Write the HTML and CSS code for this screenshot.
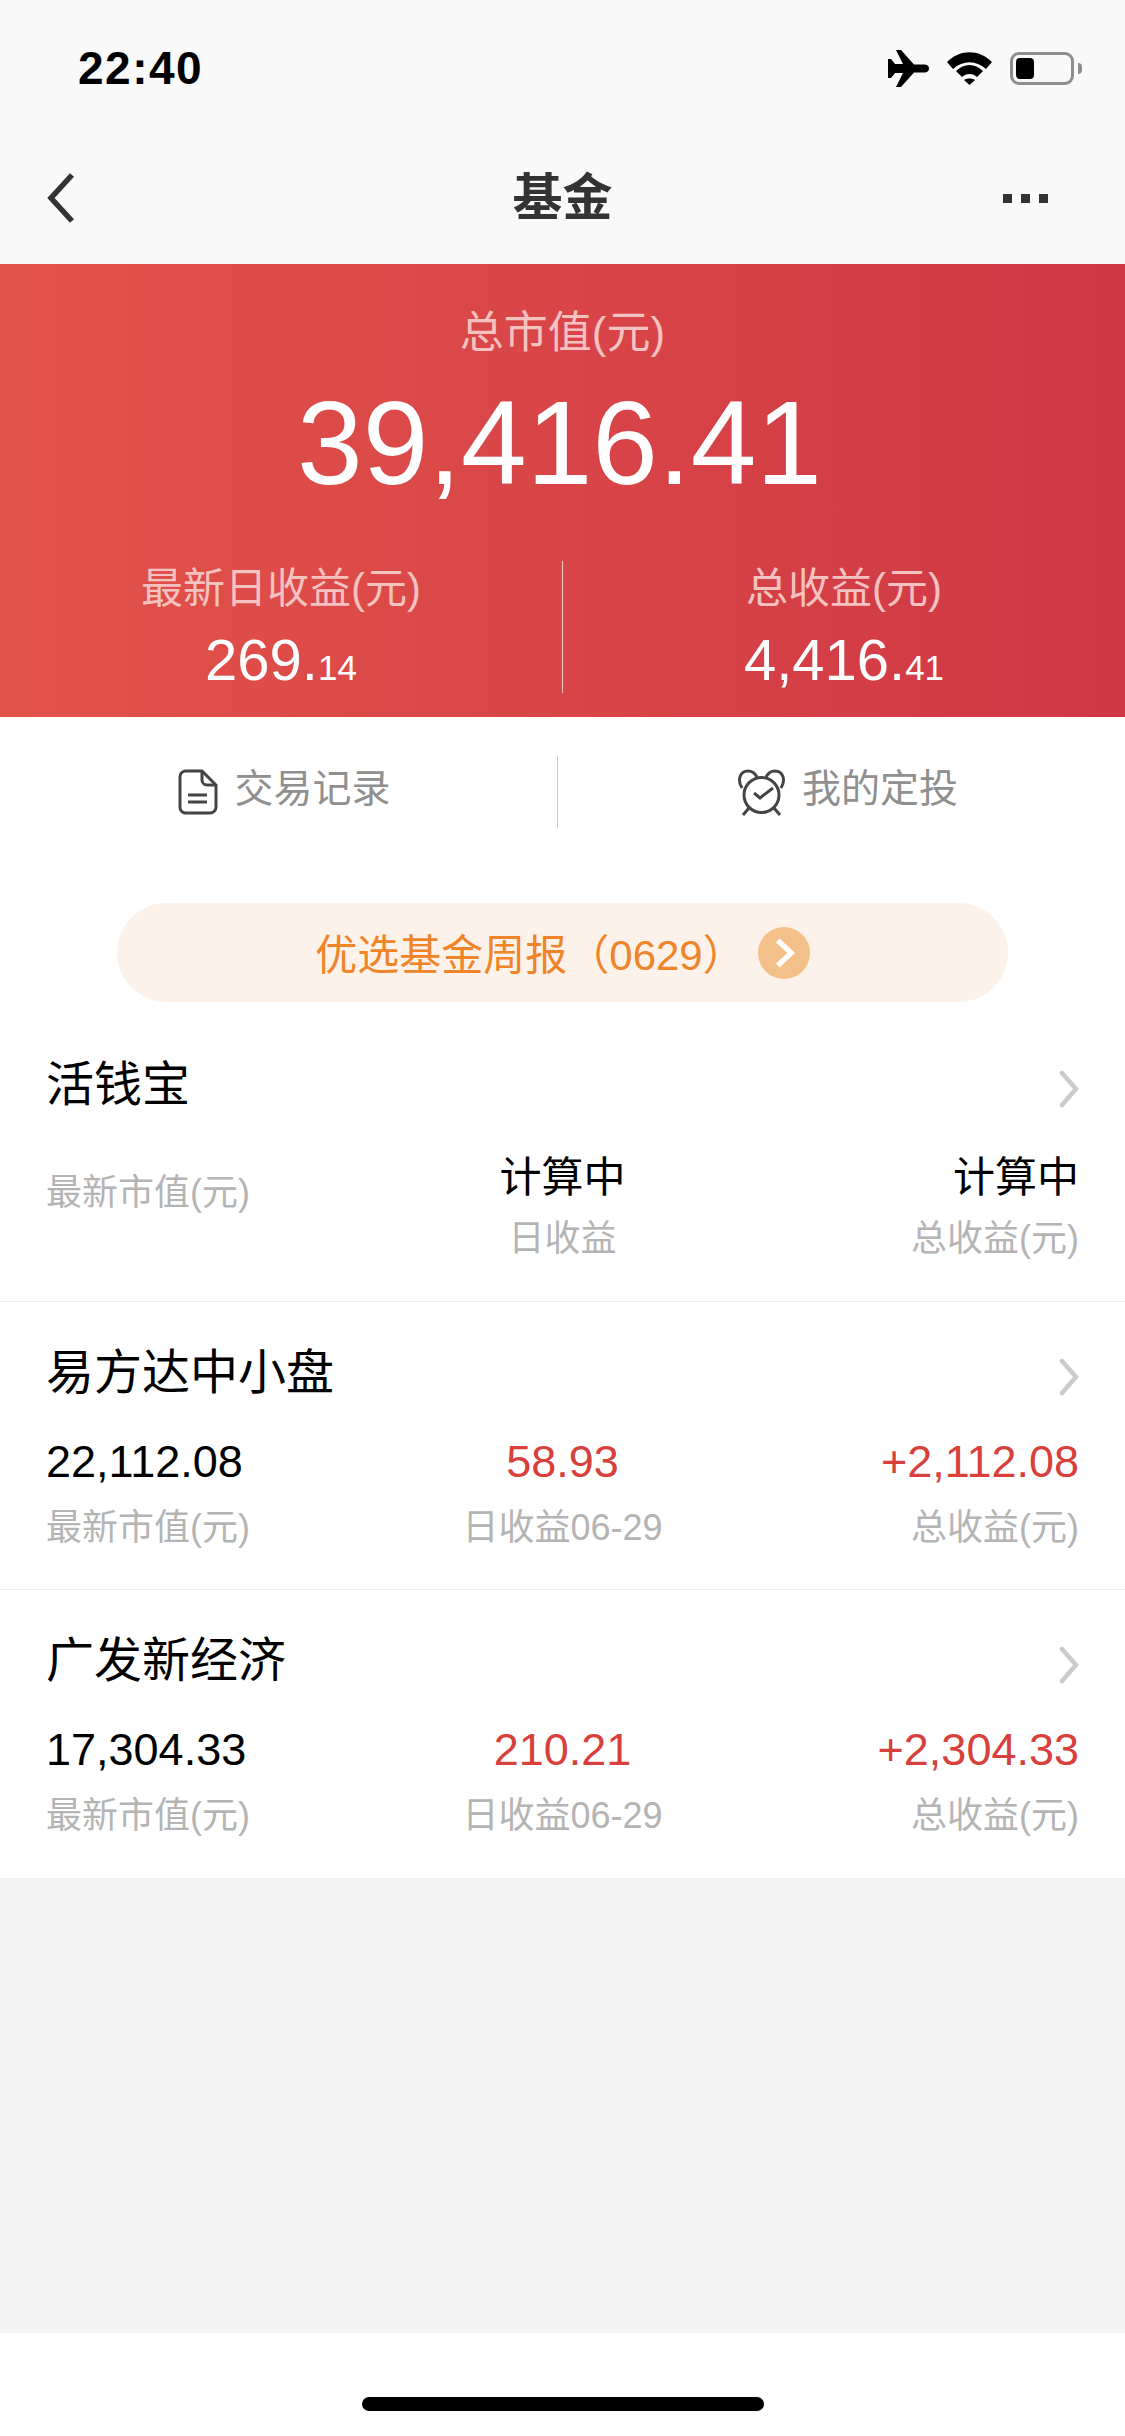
FILE: index.html
```html
<!DOCTYPE html>
<html lang="zh-CN">
<head>
    <meta charset="UTF-8">
    <meta name="viewport" content="width=device-width, initial-scale=1.0">
    <title>基金</title>
    <link rel="stylesheet" href="styles.css">
</head>
<body>
    <div class="top-bar">
        <div class="status-bar">
            <span class="time">22:40</span>
            <div class="status-icons">
                <svg class="icon-plane" width="41" height="37" viewBox="0 0 41 37">
                    <path d="M0 9h3l4 5h8L8 0h5l13 14.500h11q4 .5 4 4t-4 4H26L13 37H8l7-14H7l-4 5H0z"/>
                </svg>
                <svg class="icon-wifi" width="45" height="33" viewBox="0 0 45 33">
                    <path d="M0 10C13-3 32-3 45 10l-6 7C29 8 16 8 6 17z"/>
                    <path d="M9 19c8-8 19-8 27 0l-6 6c-4-4-11-4-15 0z"/>
                    <path d="M17 28c3-2 8-2 11 0l-5.500 5z"/>
                </svg>
                <div class="battery">
                    <div class="battery-body"><div class="battery-level"></div></div>
                    <div class="battery-cap"></div>
                </div>
            </div>
        </div>
        <div class="nav-bar">
            <svg class="nav-back" width="30" height="50" viewBox="0 0 30 50">
                <path d="M26 2 5 25l21 23" fill="none" stroke="#333" stroke-width="5.500"/>
            </svg>
            <h1>基金</h1>
            <div class="nav-more"><i></i><i></i><i></i></div>
        </div>
    </div>

    <section class="summary">
        <div class="summary-label summary-label-top">总市值(元)</div>
        <div class="summary-total">39,416.41</div>
        <div class="summary-split">
            <div class="summary-col">
                <div class="summary-label">最新日收益(元)</div>
                <div class="summary-value">269.<small>14</small></div>
            </div>
            <div class="summary-col">
                <div class="summary-label">总收益(元)</div>
                <div class="summary-value">4,416.<small>41</small></div>
            </div>
        </div>
    </section>

    <main class="content">
        <div class="quick-links">
            <a class="quick-link">
                <svg width="40" height="46" viewBox="0 0 40 46" fill="none" stroke="#444" stroke-width="3">
                    <path d="M7 2h17l14 14v22a6 6 0 0 1-6 6H7a6 6 0 0 1-5-6V8a6 6 0 0 1 5-6z"/>
                    <path d="M24 2v9a5 5 0 0 0 5 5h9"/>
                    <path d="M10 26h19M10 33h19"/>
                </svg>
                <span>交易记录</span>
            </a>
            <a class="quick-link">
                <svg width="49" height="48" viewBox="0 0 49 48" fill="none" stroke="#444" stroke-width="3">
                    <circle cx="24.500" cy="27" r="17.500"/>
                    <path d="M5 20C0 12 3 3 11 3c4 0 7 2 9 6M44 20c5-8 2-17-6-17-4 0-7 2-9 6"/>
                    <path d="M12 40l-6 7M37 40l6 7"/>
                    <path d="M17 25l6 5 13-10"/>
                </svg>
                <span>我的定投</span>
            </a>
        </div>

        <a class="report">
            <span>优选基金周报（0629）</span>
            <svg width="52" height="52" viewBox="0 0 50 50">
                <circle cx="25" cy="25" r="25" fill="#f4c08a"/>
                <path d="M19 13l13 12-13 12" fill="none" stroke="#fff" stroke-width="5"/>
            </svg>
        </a>

        <div class="fund fund-first">
            <div class="fund-head">
                <h2>活钱宝</h2>
                <svg width="22" height="38" viewBox="0 0 22 38"><path d="M5 3l14 16L5 35" fill="none" stroke="#ccc" stroke-width="4.500" stroke-linecap="round"/></svg>
            </div>
            <div class="fund-cols">
                <div class="fund-col fund-col-mid">
                    <div class="cap">最新市值(元)</div>
                </div>
                <div class="fund-col center">
                    <div class="val">计算中</div>
                    <div class="cap">日收益</div>
                </div>
                <div class="fund-col right">
                    <div class="val">计算中</div>
                    <div class="cap">总收益(元)</div>
                </div>
            </div>
        </div>

        <div class="fund">
            <div class="fund-head">
                <h2>易方达中小盘</h2>
                <svg width="22" height="38" viewBox="0 0 22 38"><path d="M5 3l14 16L5 35" fill="none" stroke="#ccc" stroke-width="4.500" stroke-linecap="round"/></svg>
            </div>
            <div class="fund-cols">
                <div class="fund-col">
                    <div class="val">22,112.08</div>
                    <div class="cap">最新市值(元)</div>
                </div>
                <div class="fund-col center">
                    <div class="val up">58.93</div>
                    <div class="cap">日收益06-29</div>
                </div>
                <div class="fund-col right">
                    <div class="val up">+2,112.08</div>
                    <div class="cap">总收益(元)</div>
                </div>
            </div>
        </div>

        <div class="fund fund-last">
            <div class="fund-head">
                <h2>广发新经济</h2>
                <svg width="22" height="38" viewBox="0 0 22 38"><path d="M5 3l14 16L5 35" fill="none" stroke="#ccc" stroke-width="4.500" stroke-linecap="round"/></svg>
            </div>
            <div class="fund-cols">
                <div class="fund-col">
                    <div class="val">17,304.33</div>
                    <div class="cap">最新市值(元)</div>
                </div>
                <div class="fund-col center">
                    <div class="val up">210.21</div>
                    <div class="cap">日收益06-29</div>
                </div>
                <div class="fund-col right">
                    <div class="val up">+2,304.33</div>
                    <div class="cap">总收益(元)</div>
                </div>
            </div>
        </div>
    </main>

    <div class="filler"></div>
    <div class="home-area"><div class="home-indicator"></div></div>
</body>
</html>
```

FILE: styles.css
```css
/* Page */
html, body {
    margin: 0;
    padding: 0;
}
body {
    width: 1125px;
    height: 2436px;
    display: flex;
    flex-direction: column;
    font-family: "Liberation Sans", "Noto Sans CJK SC", sans-serif;
    background-color: #f4f4f4;
    color: #000;
    overflow: hidden;
}

/* Status bar and nav */
.top-bar {
    height: 264px;
    background-color: #f9f9f9;
}
.status-bar {
    height: 136px;
    display: flex;
    justify-content: space-between;
    align-items: center;
    padding: 0 43px 0 78px;
}
.time {
    font-size: 46px;
    font-weight: bold;
    letter-spacing: 1.500px;
}
.status-icons {
    display: flex;
    align-items: center;
    gap: 18px;
}
.battery {
    display: flex;
    align-items: center;
    gap: 4px;
}
.battery-body {
    box-sizing: border-box;
    width: 64px;
    height: 33px;
    border: 3px solid #8e8e8e;
    border-radius: 9px;
    padding: 3px;
}
.battery-level {
    width: 18px;
    height: 100%;
    background-color: #000;
    border-radius: 4px;
}
.battery-cap {
    width: 4px;
    height: 11px;
    background-color: #8e8e8e;
    border-radius: 0 4px 4px 0;
}
.nav-bar {
    height: 128px;
    box-sizing: border-box;
    display: grid;
    grid-template-columns: 1fr auto 1fr;
    align-items: center;
    padding: 0 46px 4px;
}
.nav-bar h1 {
    margin: 0;
    padding-bottom: 10px;
    font-size: 50px;
    font-weight: bold;
    color: #333;
}
.nav-more {
    display: flex;
    justify-content: flex-end;
    gap: 9px;
    margin-right: 31px;
}
.nav-more i {
    width: 9px;
    height: 9px;
    background-color: #333;
}

/* Red summary */
.summary {
    height: 453px;
    box-sizing: border-box;
    padding-top: 45px;
    text-align: center;
    color: #fff;
    background: linear-gradient(90deg, #e2534a, #cf3745);
}
.summary-label {
    font-size: 42px;
    line-height: 48px;
    color: #f4c2c0;
}
.summary-label-top {
    font-size: 44px;
}
.summary-total {
    font-size: 118px;
    line-height: 134px;
    margin-top: 19px;
    padding-right: 6px;
}
.summary-split {
    display: flex;
    margin-top: 51px;
}
.summary-col {
    flex: 1;
    height: 132px;
    padding-top: 4px;
    box-sizing: border-box;
}
.summary-col + .summary-col {
    border-left: 1px solid #f4c2c0;
}
.summary-value {
    font-size: 58px;
    line-height: 70px;
    margin-top: 12px;
}
.summary-value small {
    font-size: 35px;
}

/* White content */
.content {
    background-color: #fff;
}
.quick-links {
    display: grid;
    grid-template-columns: 557px 1fr;
    padding-top: 39px;
    height: 147px;
}
.quick-link {
    height: 72px;
    display: flex;
    align-items: center;
    justify-content: center;
    gap: 16px;
    padding-left: 12px;
    font-size: 39px;
    color: #8f8f8f;
}
.quick-link span {
    padding-bottom: 14px;
}
.quick-link + .quick-link {
    border-left: 1px solid #c8c8c8;
}
.report {
    height: 99px;
    margin: 0 117px;
    display: flex;
    align-items: center;
    justify-content: center;
    gap: 13px;
    border-radius: 50px;
    font-size: 42px;
    color: #ef8429;
    background-color: #fcf2e9;
}
.report span {
    padding-bottom: 3px;
}

/* Fund rows */
.fund {
    height: 288px;
    box-sizing: border-box;
    padding: 40px 46px 0;
    border-bottom: 1px solid #eee;
}
.fund-first {
    height: 300px;
    padding-top: 52px;
}
.fund-last {
    height: 289px;
}
.fund-head {
    display: flex;
    justify-content: space-between;
    align-items: center;
    height: 70px;
}
.fund-head h2 {
    margin: 0;
    padding-bottom: 18px;
    font-size: 48px;
    font-weight: normal;
}
.fund-cols {
    display: grid;
    grid-template-columns: 1fr 1fr 1fr;
    margin-top: 23px;
}
.fund-first .fund-cols {
    margin-top: 27px;
}
.fund-first .val {
    font-size: 42px;
}
.fund-first .cap {
    margin-top: 12px;
}
.fund-col-mid {
    align-self: center;
}
.center {
    text-align: center;
}
.right {
    text-align: right;
}
.val {
    font-size: 45px;
    line-height: 54px;
}
.up {
    color: #d8403c;
}
.cap {
    font-size: 36px;
    line-height: 44px;
    margin-top: 17px;
    color: #b4b4b4;
}
.fund-first .fund-col-mid .cap {
    margin-top: 0;
    padding-bottom: 26px;
}

/* Bottom */
.filler {
    flex: 1;
}
.home-area {
    height: 103px;
    position: relative;
    background-color: #fff;
}
.home-indicator {
    position: absolute;
    left: 362px;
    bottom: 25px;
    width: 402px;
    height: 14px;
    border-radius: 7px;
    background-color: #000;
}
```
